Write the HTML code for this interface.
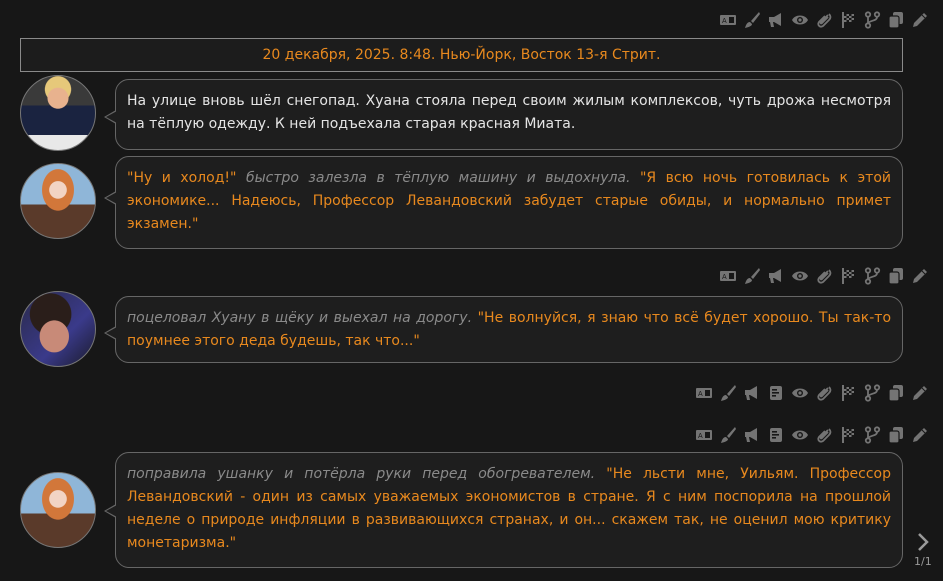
<!DOCTYPE html>
<html><head><meta charset="utf-8"><style>
*{margin:0;padding:0;box-sizing:border-box}
body{width:943px;height:581px;background:#171717;font-family:"DejaVu Sans","Liberation Sans",sans-serif;font-size:14px;color:#e4e4e4;position:relative;overflow:hidden}
.icons{position:absolute;right:13px;height:20px;display:flex;gap:5px;align-items:center}
.icons svg{width:19px;height:18px;fill:#747474}
.date{position:absolute;left:20px;top:38px;width:883px;height:34px;border:1px solid #8a8a8a;background:#1c1c1c;color:#e8891e;text-align:center;line-height:32px;font-size:14px}
.av{position:absolute;left:20px;width:76px;height:76px;border-radius:50%;border:1px solid #777;overflow:hidden}
.b{position:absolute;left:115px;width:788px;border:1px solid #666;border-radius:14px;background:#1e1e1e;padding:10px 11px 0 11px;line-height:23px}
.b:before{content:"";position:absolute;left:-12px;top:var(--t);width:0;height:0;border-top:7px solid transparent;border-bottom:7px solid transparent;border-right:12px solid #666}
.b:after{content:"";position:absolute;left:-10px;top:calc(var(--t) + 1px);width:0;height:0;border-top:6px solid transparent;border-bottom:6px solid transparent;border-right:11px solid #1e1e1e}
.l{text-align:justify;text-align-last:justify;white-space:nowrap}
.l.e{text-align-last:left}
.o{color:#e8891e}.i{color:#8a8a8a;font-style:italic}
</style></head><body>
<svg width="0" height="0" style="position:absolute"><defs>
<g id="tr"><rect x="1" y="4" width="16" height="10" rx="1"/><text x="3" y="12" font-size="7" fill="#171717" font-family="Liberation Sans">A</text><rect x="10" y="6" width="5" height="6" fill="#171717"/></g>
<g id="br"><path d="M16 1 L8 10 L10 12 L17 3Z M7 11 C4 11 3 14 2 17 C6 16 9 15 9 13Z"/></g>
<g id="mg"><path d="M2 6 H7 L14 2 V15 L7 11 H6 L7 16 H4 L3 11 H2Z"/></g>
<g id="doc"><rect x="3" y="2" width="12" height="14" rx="2"/><rect x="5" y="5" width="5" height="1.6" fill="#171717"/><rect x="5" y="8" width="7" height="1.6" fill="#171717"/><rect x="5" y="11" width="4" height="1.6" fill="#171717"/></g>
<g id="ey"><path d="M1 9 C4 3 14 3 17 9 C14 15 4 15 1 9Z"/><circle cx="9" cy="9" r="3" fill="#171717"/><circle cx="9" cy="9" r="1.6"/></g>
<g id="pc"><path d="M13 4 L6 11 C5 12 6 13 7 12 L13 6" fill="none" stroke="#747474" stroke-width="1.8"/><path d="M14 3 C16 5 16 7 14 9 L8 15 C5 17 2 14 4 11 L10 5" fill="none" stroke="#747474" stroke-width="1.8"/></g>
<g id="fl"><path d="M3 1 V17 H5 V11 H15 V3 H5 V1Z"/><path d="M5 3h2.5v2h-2.5zM10 3h2.5v2h-2.5zM7.5 5h2.5v2h-2.5zM12.5 5h2.5v2h-2.5zM5 7h2.5v2h-2.5zM10 7h2.5v2h-2.5zM7.5 9h2.5v2h-2.5zM12.5 9h2.5v2h-2.5z" fill="#171717"/></g>
<g id="fk"><circle cx="5" cy="3.5" r="2.2" fill="none" stroke="#747474" stroke-width="1.8"/><circle cx="14" cy="3.5" r="2.2" fill="none" stroke="#747474" stroke-width="1.8"/><circle cx="5" cy="14.5" r="2.2" fill="none" stroke="#747474" stroke-width="1.8"/><path d="M5 6 V12 M14 6 C14 10 8 9 5 12" fill="none" stroke="#747474" stroke-width="1.8"/></g>
<g id="cp"><rect x="6" y="1" width="10" height="12" rx="2"/><rect x="2" y="5" width="10" height="12" rx="2" stroke="#171717" stroke-width="1.2"/></g>
<g id="pn"><path d="M13 2 L16 5 L6 15 L2 16 L3 12Z"/><path d="M11 4 L14 7" stroke="#171717" stroke-width="1"/></g>
</defs></svg>
<div class="icons" style="top:10px"><svg><use href="#tr"/></svg><svg><use href="#br"/></svg><svg><use href="#mg"/></svg><svg><use href="#ey"/></svg><svg><use href="#pc"/></svg><svg><use href="#fl"/></svg><svg><use href="#fk"/></svg><svg><use href="#cp"/></svg><svg><use href="#pn"/></svg></div>
<div class="date">20 декабря, 2025. 8:48. Нью-Йорк, Восток 13-я Стрит.</div>

<div class="av" style="top:75px;background:radial-gradient(circle at 50% 30%,#e8b28e 0 16%,transparent 17%),radial-gradient(circle at 50% 18%,#e6c87a 0 18%,transparent 19%),linear-gradient(180deg,#3a3a3a 0 40%,#1a2340 40% 80%,#e8e8e8 80%)"></div>
<div class="b" style="top:79px;height:71px;--t:30px"><div class="l">На улице вновь шёл снегопад. Хуана стояла перед своим жилым комплексов, чуть дрожа несмотря</div><div class="l e">на тёплую одежду. К ней подъехала старая красная Миата.</div></div>

<div class="av" style="top:163px;background:radial-gradient(circle at 50% 35%,#f2d4c4 0 14%,transparent 15%),radial-gradient(ellipse at 50% 35%,#d2773a 0 30%,transparent 31%),linear-gradient(180deg,#8fb6d8 0 55%,#5a3a2a 55% 100%)"></div>
<div class="b" style="top:156px;height:93px;--t:34px"><div class="l"><span class="o">"Ну и холод!"</span> <span class="i">быстро залезла в тёплую машину и выдохнула.</span> <span class="o">"Я всю ночь готовилась к этой</span></div><div class="l o">экономике... Надеюсь, Профессор Левандовский забудет старые обиды, и нормально примет</div><div class="l e o">экзамен."</div></div>

<div class="icons" style="top:266px"><svg><use href="#tr"/></svg><svg><use href="#br"/></svg><svg><use href="#mg"/></svg><svg><use href="#ey"/></svg><svg><use href="#pc"/></svg><svg><use href="#fl"/></svg><svg><use href="#fk"/></svg><svg><use href="#cp"/></svg><svg><use href="#pn"/></svg></div>

<div class="av" style="top:291px;background:radial-gradient(ellipse at 45% 60%,#c88a78 0 25%,transparent 26%),radial-gradient(circle at 40% 30%,#2a1e1a 0 30%,transparent 31%),linear-gradient(135deg,#2a2a4a,#3a3a8a 60%,#1a1a2a)"></div>
<div class="b" style="top:296px;height:67px;--t:29px"><div class="l"><span class="i">поцеловал Хуану в щёку и выехал на дорогу.</span> <span class="o">"Не волнуйся, я знаю что всё будет хорошо. Ты так-то</span></div><div class="l e o">поумнее этого деда будешь, так что..."</div></div>

<div class="icons" style="top:383px"><svg><use href="#tr"/></svg><svg><use href="#br"/></svg><svg><use href="#mg"/></svg><svg><use href="#doc"/></svg><svg><use href="#ey"/></svg><svg><use href="#pc"/></svg><svg><use href="#fl"/></svg><svg><use href="#fk"/></svg><svg><use href="#cp"/></svg><svg><use href="#pn"/></svg></div>
<div class="icons" style="top:425px"><svg><use href="#tr"/></svg><svg><use href="#br"/></svg><svg><use href="#mg"/></svg><svg><use href="#doc"/></svg><svg><use href="#ey"/></svg><svg><use href="#pc"/></svg><svg><use href="#fl"/></svg><svg><use href="#fk"/></svg><svg><use href="#cp"/></svg><svg><use href="#pn"/></svg></div>

<div class="av" style="top:472px;background:radial-gradient(circle at 50% 35%,#f2d4c4 0 14%,transparent 15%),radial-gradient(ellipse at 50% 35%,#d2773a 0 30%,transparent 31%),linear-gradient(180deg,#8fb6d8 0 55%,#5a3a2a 55% 100%)"></div>
<div class="b" style="top:452px;height:116px;--t:51px"><div class="l"><span class="i">поправила ушанку и потёрла руки перед обогревателем.</span> <span class="o">"Не льсти мне, Уильям. Профессор</span></div><div class="l o">Левандовский - один из самых уважаемых экономистов в стране. Я с ним поспорила на прошлой</div><div class="l o">неделе о природе инфляции в развивающихся странах, и он... скажем так, не оценил мою критику</div><div class="l e o">монетаризма."</div></div>

<svg style="position:absolute;left:915px;top:531px" width="16" height="22"><path d="M4 3 L12 11 L4 19" fill="none" stroke="#9a9a9a" stroke-width="2.5"/></svg>
<div style="position:absolute;left:914px;top:555px;font-size:11px;color:#9a9a9a">1/1</div>
</body></html>
